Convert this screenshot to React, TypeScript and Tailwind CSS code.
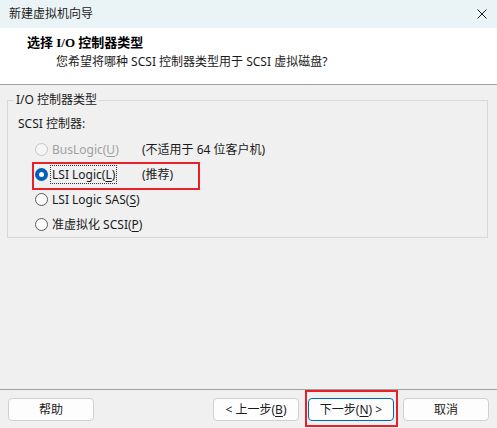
import React from "react";

const ui = "font-['Noto_Sans','Noto_Sans_CJK_SC',sans-serif]";

function Radio({ state }: { state: "off" | "on" | "disabled" }) {
  if (state === "on") {
    return (
      <span className="flex h-[13px] w-[13px] shrink-0 items-center justify-center rounded-full bg-[#005fb8]">
        <span className="h-[5px] w-[5px] rounded-full bg-white" />
      </span>
    );
  }
  if (state === "disabled") {
    return <span className="h-[13px] w-[13px] shrink-0 rounded-full border border-[#c6c6c6] bg-[#f5f5f5]" />;
  }
  return <span className="h-[13px] w-[13px] shrink-0 rounded-full border border-[#5c5c5c] bg-[#fbfbfb]" />;
}

function Option({
  state,
  label,
  hot,
  note,
  focus,
  marked,
}: {
  state: "off" | "on" | "disabled";
  label: string;
  hot: string;
  note?: string;
  focus?: boolean;
  marked?: boolean;
}) {
  return (
    <div className="relative flex h-[25px] items-center whitespace-nowrap pl-[17px]">
      <Radio state={state} />
      <div className="ml-[2px] w-[92px] shrink-0">
        <span
          className={
            "border px-px " +
            (focus ? "border-dotted border-[#333]" : "border-transparent") +
            (state === "disabled" ? " text-[#a0a0a0]" : " text-[#1a1a1a]")
          }
        >
          {label}(<span className="underline underline-offset-2">{hot}</span>)
        </span>
      </div>
      {note && <span className="text-[#1a1a1a]">{note}</span>}
      {marked && (
        <span className="absolute left-[14px] top-0 h-[28px] w-[168px] border-2 border-[#e8202a]" />
      )}
    </div>
  );
}

function Btn({ children, main }: { children: React.ReactNode; main?: boolean }) {
  return (
    <button
      className={
        "flex h-[23px] w-[86px] items-center justify-center whitespace-nowrap rounded-[4px] bg-[#fdfdfd] text-[12px] text-[#1a1a1a] " +
        (main ? "border border-[#0067c0] shadow-[inset_0_0_0_1px_#fdfdfd]" : "border border-[#d0d0d0]")
      }
    >
      {children}
    </button>
  );
}

export default function App() {
  return (
    <div className={"flex h-[428px] w-[497px] flex-col bg-[#f0f0f0] text-[12px] leading-[16px] " + ui}>
      {/* title bar */}
      <div className="flex h-[28px] items-center justify-between bg-[#eaf4f7] pl-[9px] pr-[10px] text-[#1a1a1a]">
        <span>新建虚拟机向导</span>
        <svg width="10" height="10" viewBox="0 0 10 10">
          <path d="M0.5 0.5 L9.5 9.5 M9.5 0.5 L0.5 9.5" stroke="#1a1a1a" strokeWidth="1" fill="none" />
        </svg>
      </div>

      {/* header */}
      <div className="h-[57px] border-b border-[#a0a0a0] bg-white pt-[7px]">
        <div className="pl-[27px] text-[13px] font-bold text-black font-['Liberation_Serif','Noto_Sans_CJK_SC',serif]">
          选择 I/O 控制器类型
        </div>
        <div className="mt-[3px] pl-[56px] text-[#1a1a1a]">您希望将哪种 SCSI 控制器类型用于 SCSI 虚拟磁盘?</div>
      </div>

      {/* body */}
      <div className="flex-1">
        <fieldset className="ml-[7px] mr-[9px] mt-[7px] border border-[#d8d8d8] pl-[10px] pt-[8px]">
          <legend className="-ml-[4px] px-[2px] text-[#1a1a1a]">I/O 控制器类型</legend>
          <div className="text-[#1a1a1a]">SCSI 控制器:</div>
          <div className="mt-[5px]">
            <Option state="disabled" label="BusLogic" hot="U" note="(不适用于 64 位客户机)" />
            <Option state="on" label="LSI Logic" hot="L" note="(推荐)" focus marked />
            <Option state="off" label="LSI Logic SAS" hot="S" />
            <Option state="off" label="准虚拟化 SCSI" hot="P" />
          </div>
        </fieldset>
      </div>

      {/* footer */}
      <div className="flex h-[39px] items-start border-t border-[#a0a0a0] px-[8px] pt-[8px]">
        <Btn>帮助</Btn>
        <div className="ml-auto flex gap-[9px]">
          <Btn>
            &lt; 上一步(<span className="underline underline-offset-2">B</span>)
          </Btn>
          <div className="relative">
            <Btn main>
              下一步(<span className="underline underline-offset-2">N</span>) &gt;
            </Btn>
            <span className="absolute -left-[3px] -right-[4px] -top-[8px] h-[37px] border-2 border-[#e8202a]" />
          </div>
          <Btn>取消</Btn>
        </div>
      </div>
    </div>
  );
}
